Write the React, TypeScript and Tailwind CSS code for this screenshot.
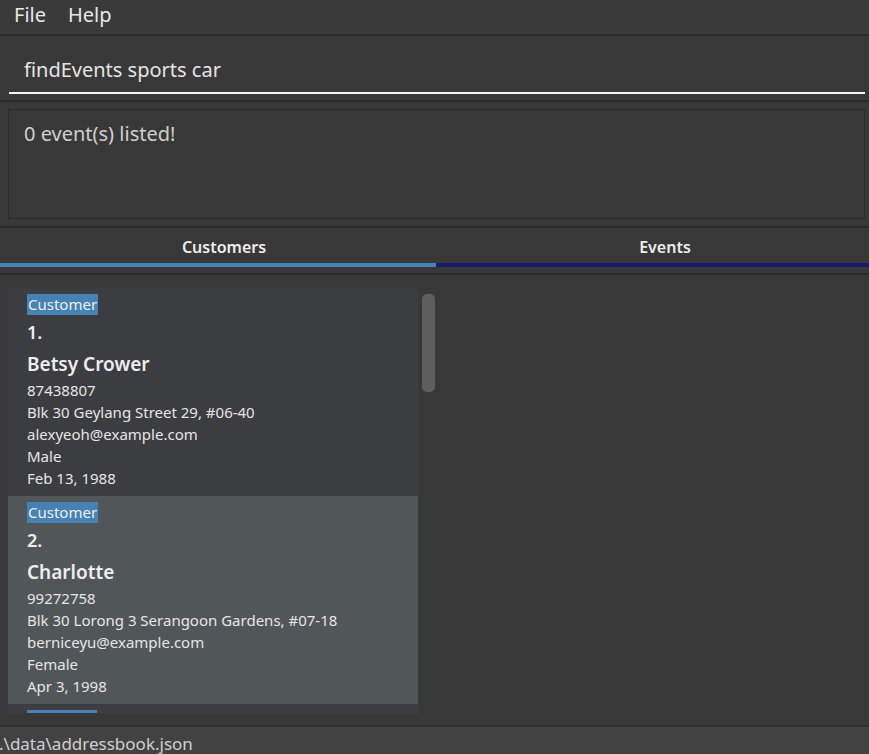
import React from 'react';

interface Customer {
  name: string;
  phone: string;
  address: string;
  email: string;
  gender: string;
  birthday: string;
}

const customers: Customer[] = [
  {
    name: 'Betsy Crower',
    phone: '87438807',
    address: 'Blk 30 Geylang Street 29, #06-40',
    email: 'alexyeoh@example.com',
    gender: 'Male',
    birthday: 'Feb 13, 1988',
  },
  {
    name: 'Charlotte',
    phone: '99272758',
    address: 'Blk 30 Lorong 3 Serangoon Gardens, #07-18',
    email: 'berniceyu@example.com',
    gender: 'Female',
    birthday: 'Apr 3, 1998',
  },
];

const font = { fontFamily: '"Segoe UI", "Noto Sans", "Open Sans", sans-serif' };

const CustomerCard: React.FC<{ c: Customer; index: number; selected: boolean }> = ({ c, index, selected }) => (
  <div className={`h-[208px] pl-[19px] pt-[6px] ${selected ? 'bg-[#515658]' : 'bg-[#3c3d40]'}`}>
    <div className="w-fit bg-[#4682b4] px-[1px] h-[21px] leading-[20px] text-[15px] text-[#f0f0f0]">Customer</div>
    <div className="mt-[5px] h-[24px] leading-[24px] text-[18px] font-semibold text-[#eeeeee]">{index}.</div>
    <div className="mt-[7px] h-[26px] leading-[26px] text-[19px] font-semibold text-[#eeeeee]">{c.name}</div>
    <div className="mt-[2px] text-[15px] leading-[22px] text-[#e6e6e6]">
      <div>{c.phone}</div>
      <div>{c.address}</div>
      <div>{c.email}</div>
      <div>{c.gender}</div>
      <div>{c.birthday}</div>
    </div>
  </div>
);

export default function App() {
  return (
    <div className="w-[869px] h-[754px] overflow-hidden bg-[#383838] flex flex-col" style={font}>
      {/* menu bar */}
      <div className="h-[36px] flex items-center gap-[22px] pl-[14px] pb-[4px] bg-[#3a3a3a] border-b-2 border-[#2b2b2b] text-[20px] text-[#e8e8e8]">
        <span>File</span>
        <span>Help</span>
      </div>

      {/* command box */}
      <div className="h-[66px] pl-[9px] pr-[4px] pt-[16px] bg-[#383838] border-b-2 border-[#2b2b2b]">
        <div className="h-[42px] border-b-2 border-[#f4f4f4] pl-[15px] text-[20px] leading-[36px] text-[#e4e4e4]">
          findEvents sports car
        </div>
      </div>

      {/* result box */}
      <div className="h-[126px] pl-[8px] pr-[4px] pt-[7px] border-b-2 border-[#2b2b2b]">
        <div className="h-[110px] border border-[#2a2a2a] pl-[15px] pt-[10px] text-[20px] leading-[28px] text-[#cfcfcf]">
          0 event(s) listed!
        </div>
      </div>

      {/* tabs */}
      <div className="h-[35px] flex pt-[3px] text-[16px] font-semibold text-[#eeeeee]">
        <div className="w-[436px] flex items-center justify-center pl-[12px]">Customers</div>
        <div className="flex-1 flex items-center justify-center pl-[25px]">Events</div>
      </div>
      <div className="h-[4px] flex">
        <div className="w-[436px] bg-[#4682b4]" />
        <div className="flex-1 bg-[#191970]" />
      </div>
      <div className="h-[6px]" />
      <div className="h-[2px] bg-[#2c2c2c]" />

      {/* list */}
      <div className="flex-1 pt-[13px] pl-[8px] flex">
        <div className="w-[410px] h-[425px] overflow-hidden bg-[#3c3d40]">
          {customers.map((c, i) => (
            <CustomerCard key={c.name} c={c} index={i + 1} selected={i === 1} />
          ))}
          <div className="pl-[19px] pt-[6px]">
            <div className="w-[70px] h-[4px] bg-[#4682b4]" />
          </div>
        </div>
        <div className="ml-[4px] pt-[6px]">
          <div className="w-[13px] h-[98px] rounded-[5px] bg-[#5e5e5e]" />
        </div>
      </div>

      {/* status bar */}
      <div className="h-[29px] bg-[#424242] border-t-2 border-[#2e2e2e] flex items-end -ml-[1px] text-[17px] leading-[21px] text-[#d0d0d0]">
        .\data\addressbook.json
      </div>
    </div>
  );
}
